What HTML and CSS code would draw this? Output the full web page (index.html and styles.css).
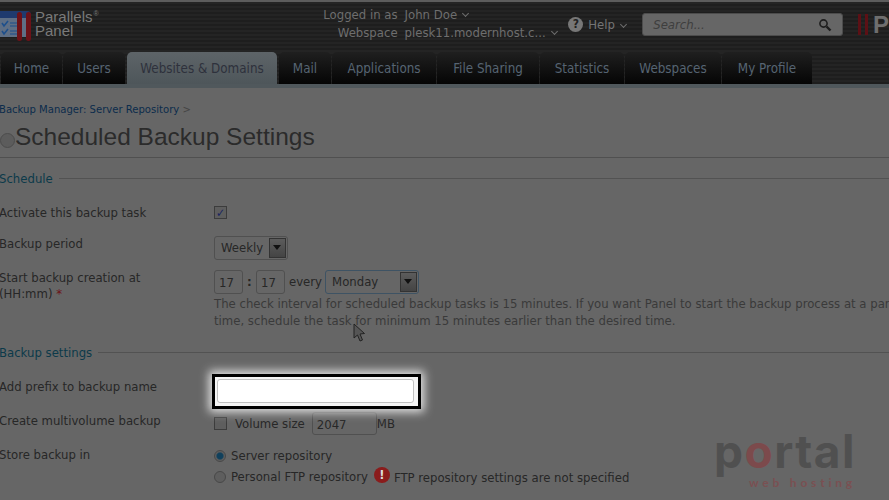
FILE: index.html
```html
<!DOCTYPE html>
<html lang="en">

<head>
    <meta charset="UTF-8">
    <title>Scheduled Backup Settings</title>
    <link rel="stylesheet" href="styles.css">
</head>

<body>
    <div class="header">
        <div class="logo">
            <svg class="logo-icon" width="32" height="30" viewBox="0 0 32 30">
                <path d="M0 0h27a4 4 0 0 1 4 4v8H0z" fill="#1f3a6e"></path>
                <path d="M0 7h28v17a2 2 0 0 1-2 2H0z" fill="#5f6f85"></path>
                <path d="M2 12l2 3 4-5M2 20l2 3 4-5" fill="none" stroke="#1d4f8c" stroke-width="1.6"></path>
                <path d="M10 12h7M10 15h7M10 20h7M10 23h7" stroke="#1d4f8c" stroke-width="1.2"></path>
                <rect x="17" y="1" width="5" height="29" rx="2.500" fill="#6c1218"></rect>
                <rect x="26" y="1" width="5" height="29" rx="2.500" fill="#6c1218"></rect>
            </svg>
            <div class="logo-text">Parallels<sup>®</sup><br>Panel</div>
        </div>
        <div class="account">
            <div class="account-row">
                <span class="account-label">Logged in as</span>
                <span class="account-value">John Doe</span>
                <span class="caret"></span>
            </div>
            <div class="account-row">
                <span class="account-label">Webspace</span>
                <span class="account-value">plesk11.modernhost.c...</span>
                <span class="caret"></span>
            </div>
        </div>
        <div class="help">
            <span class="help-icon">?</span>
            <span class="help-text">Help</span>
            <span class="caret"></span>
        </div>
        <div class="search">
            <span>Search...</span>
            <svg width="14" height="14" viewBox="0 0 14 14">
                <circle cx="5.500" cy="5.500" r="3.600" fill="none" stroke="#1e1e1e" stroke-width="1.600"></circle>
                <path d="M8.500 8.500l4 4" stroke="#1e1e1e" stroke-width="2.400"></path>
            </svg>
        </div>
        <div class="brand">
            <i></i><i></i><b>P</b>
        </div>
    </div>

    <div class="tabs">
        <a class="tab">Home</a>
        <a class="tab">Users</a>
        <a class="tab active">Websites &amp; Domains</a>
        <a class="tab">Mail</a>
        <a class="tab">Applications</a>
        <a class="tab">File Sharing</a>
        <a class="tab">Statistics</a>
        <a class="tab">Webspaces</a>
        <a class="tab">My Profile</a>
    </div>

    <div class="content">
        <div class="breadcrumb"><a>Backup Manager: Server Repository</a> <span>&gt;</span></div>
        <div class="title">
            <span class="title-icon"></span>
            <h1>Scheduled Backup Settings</h1>
        </div>

        <div class="section">Schedule</div>
        <div class="row row-activate">
            <label>Activate this backup task</label>
            <div class="field"><span class="checkbox checked">✓</span></div>
        </div>
        <div class="row row-period">
            <label>Backup period</label>
            <div class="field">
                <span class="select select-period">Weekly<span class="arrow"></span></span>
            </div>
        </div>
        <div class="row row-start">
            <label>Start backup creation at<br>(HH:mm) <em>*</em></label>
            <div class="field">
                <div class="time">
                    <span class="input input-time">17</span>
                    <span class="colon">:</span>
                    <span class="input input-time">17</span>
                    <span>every</span>
                    <span class="select select-day">Monday<span class="arrow"></span></span>
                </div>
                <p class="hint">The check interval for scheduled backup tasks is 15 minutes. If you want Panel to start the backup process at a particular<br>time, schedule the task for minimum 15 minutes earlier than the desired time.</p>
            </div>
        </div>

        <div class="section section-backup">Backup settings</div>
        <div class="row row-prefix">
            <label>Add prefix to backup name</label>
            <div class="field">
                <div class="highlight"><span class="prefix-input"></span></div>
            </div>
        </div>
        <div class="row row-volume">
            <label>Create multivolume backup</label>
            <div class="field volume">
                <span class="checkbox"></span>
                <span class="volume-label">Volume size</span>
                <span class="input input-volume">2047</span>
                <span>MB</span>
            </div>
        </div>
        <div class="row row-store">
            <label>Store backup in</label>
            <div class="field">
                <div class="radio-row"><span class="radio on"></span>Server repository</div>
                <div class="radio-row">
                    <span class="radio"></span>Personal FTP repository
                    <span class="warn">!</span>
                    <span class="warn-text">FTP repository settings are not specified</span>
                </div>
            </div>
        </div>
    </div>

    <svg class="cursor" width="14" height="20" viewBox="0 0 14 20">
        <path d="M1 1v14l3.500-3 2.500 6 2.500-1-2.500-6 4.500-.5z" fill="#555" stroke="#222" stroke-width="1"></path>
    </svg>

    <div class="watermark">
        <div class="wm-name">p<span>o</span>rtal</div>
        <div class="wm-sub">web hosting</div>
    </div>
</body>

</html>
```

FILE: styles.css
```css
body {
    margin: 0;
    width: 889px;
    height: 500px;
    overflow: hidden;
    position: relative;
    background-color: #666;
    font-family: "DejaVu Sans", sans-serif;
    font-stretch: condensed;
    font-size: 13px;
    color: #272727;
    white-space: nowrap;
}

/* header */
.header {
    height: 50px;
    display: flex;
    border-top: 2px solid #5c5c5c;
    background: repeating-linear-gradient(#242424 0, #242424 2px, #1e1e1e 2px, #1e1e1e 4px);
    color: #6e6e6e;
}

.logo {
    width: 321px;
    display: flex;
    padding-top: 8px;
}

.logo-icon {
    margin-top: 1px;
}

.logo-text {
    margin-left: 3px;
    font-family: "Liberation Sans", sans-serif;
    font-stretch: normal;
    font-size: 15px;
    line-height: 14px;
    color: #7a7a7a;
}

.logo-text sup {
    margin-left: 1px;
    font-size: 7px;
    line-height: 0;
}

.account {
    width: 238px;
    padding-top: 4px;
}

.account-row {
    display: flex;
    height: 18px;
    line-height: 18px;
}

.account-label {
    width: 77px;
    text-align: right;
    margin-right: 7px;
}

.caret {
    width: 4px;
    height: 4px;
    margin: 5px 0 0 6px;
    border-right: 1px solid #6e6e6e;
    border-bottom: 1px solid #6e6e6e;
    transform: rotate(45deg);
}

.help {
    width: 74px;
    margin-left: 10px;
    padding-top: 15px;
    display: flex;
    align-items: flex-start;
    color: #747474;
}

.help-icon {
    width: 15px;
    height: 15px;
    margin-right: 5px;
    border-radius: 50%;
    background-color: #777;
    color: #222;
    font-weight: bold;
    font-size: 12px;
    line-height: 15px;
    text-align: center;
}

.help-text {
    line-height: 15px;
}

.search {
    box-sizing: border-box;
    width: 201px;
    height: 23px;
    margin-top: 11px;
    padding: 0 10px;
    display: flex;
    align-items: center;
    justify-content: space-between;
    border: 1px solid #4c4c4c;
    border-radius: 3px;
    background-color: #666;
    font-style: italic;
    color: #3e3e3e;
}

.brand {
    margin-left: 15px;
    padding-top: 12px;
    display: flex;
    align-items: flex-start;
}

.brand i {
    width: 3px;
    height: 21px;
    margin-right: 4px;
    background-color: #5c1015;
}

.brand b {
    margin-left: 1px;
    font-family: "Liberation Sans", sans-serif;
    font-stretch: normal;
    font-size: 24px;
    line-height: 21px;
    color: #6e6e6e;
}

/* tabs */
.tabs {
    height: 32px;
    padding-left: 1px;
    display: grid;
    grid-template-columns: 61px 62px 152px 52px 104px 102px 84px 96px 90px;
    justify-content: start;
    gap: 1px;
    border-bottom: 4px solid #50585c;
    background: repeating-linear-gradient(#242424 0, #242424 2px, #1e1e1e 2px, #1e1e1e 4px);
}

.tab {
    box-sizing: border-box;
    height: 32px;
    border-radius: 5px 5px 0 0;
    background: linear-gradient(#1f1f1f, #050505);
    font-size: 13.300px;
    line-height: 33px;
    text-align: center;
    color: #566472;
}

.tab.active {
    margin: 0 1px;
    background: linear-gradient(#5e6468, #4e565a);
    color: #2e313c;
}

/* page content */
.content {
    padding-top: 15px;
}

.breadcrumb {
    height: 14px;
    margin-left: -1px;
    font-size: 11.200px;
    line-height: 14px;
    color: #444;
}

.breadcrumb a {
    color: #0c2c4c;
}

.title {
    height: 38px;
    margin-top: 2px;
    display: flex;
    border-bottom: 1px solid #505050;
}

.title-icon {
    width: 15px;
    height: 15px;
    margin-top: 14px;
    border-radius: 50%;
    background-color: #5c5c5c;
    border: 1px solid #4c4c4c;
    box-sizing: border-box;
}

.title h1 {
    margin: 0;
    font-family: "Liberation Sans", sans-serif;
    font-stretch: normal;
    font-weight: normal;
    font-size: 24.500px;
    line-height: 36px;
    color: #2b2b2b;
}

.section {
    display: flex;
    align-items: center;
    gap: 6px;
    height: 18px;
    margin-top: 11px;
    margin-left: -1px;
    font-size: 13px;
    color: #0c3a4a;
}

.section::after {
    content: "";
    flex: 1;
    height: 1px;
    background-color: #525252;
}

.section-backup {
    margin-top: 14px;
}

.row {
    display: flex;
    line-height: 16px;
}

.row label {
    width: 215px;
    flex-shrink: 0;
    margin-left: -1px;
}

.row-activate {
    margin-top: 18px;
}

.row-period {
    margin-top: 15px;
}

.row-start {
    margin-top: 10px;
}

.row label em {
    color: #6c1218;
    font-style: normal;
}

.checkbox {
    box-sizing: border-box;
    display: inline-block;
    width: 13px;
    height: 13px;
    border: 1px solid #3c3c3c;
    background-color: #5e5e5e;
    font-size: 12px;
    font-weight: bold;
    line-height: 12px;
    text-align: center;
    color: #1a2460;
}

.select {
    box-sizing: border-box;
    display: inline-flex;
    align-items: center;
    justify-content: space-between;
    height: 24px;
    padding: 0 1px 0 6px;
    border: 1px solid #505050;
    border-radius: 3px;
    background-color: #666;
}

.select-period {
    width: 74px;
}

.select-day {
    width: 94px;
    margin-left: -1px;
    border-color: #3e5364;
}

.arrow {
    box-sizing: border-box;
    width: 17px;
    height: 20px;
    border: 1px solid #333;
    background: linear-gradient(#5c5c5c, #444);
    position: relative;
}

.arrow::after {
    content: "";
    position: absolute;
    left: 3px;
    top: 6px;
    border: 4px solid transparent;
    border-top: 5px solid #111;
    border-bottom: 0;
}

.input {
    box-sizing: border-box;
    display: inline-block;
    height: 24px;
    border: 1px solid #505050;
    border-radius: 3px;
    background-color: #666;
    line-height: 24px;
    padding-left: 4px;
}

.time {
    display: flex;
    align-items: center;
    gap: 4px;
}

.input-time {
    width: 29px;
}

.colon {
    width: 5px;
    font-weight: bold;
}

.hint {
    margin: 0;
    padding-top: 1px;
    line-height: 17px;
    color: #3a3a3a;
}

.row-prefix {
    margin-top: 13px;
    align-items: flex-start;
}

.row-prefix label {
    margin-top: 5px;
}

.highlight {
    box-sizing: border-box;
    width: 209px;
    height: 35px;
    margin-left: -2px;
    padding: 2px;
    display: flex;
    border: 3px solid #000;
    background-color: #f5f5f5;
    box-shadow: 0 0 9px 3px #e4e4e4;
    position: relative;
}

.prefix-input {
    flex: 0 0 197px;
    box-sizing: border-box;
    height: 24px;
    border: 1px solid #c0c0c0;
    border-radius: 3px;
    background-color: #fff;
}

.row-volume {
    margin-top: 3px;
}

.row-volume label {
    margin-top: 1px;
}

.volume {
    display: flex;
    align-items: center;
}

.volume-label {
    margin-left: 8px;
    margin-right: 7px;
}

.input-volume {
    width: 65px;
    height: 23px;
    border-radius: 3px;
}

.row-store {
    margin-top: 12px;
}

.row-store .field {
    margin-top: -2px;
}

.radio-row {
    display: flex;
    align-items: center;
    height: 21px;
}

.radio {
    box-sizing: border-box;
    width: 12px;
    height: 12px;
    margin: 1px 5px 0 0;
    border: 1px solid #484848;
    border-radius: 50%;
    background-color: #5e5e5e;
}

.radio.on {
    background: radial-gradient(#10405c 40%, #5e5e5e 60%);
}

.warn {
    width: 16px;
    height: 16px;
    margin-left: 6px;
    margin-top: -3px;
    border-radius: 50%;
    background-color: #8a1c1c;
    color: #ddd;
    font-weight: bold;
    line-height: 16px;
    text-align: center;
}

.warn-text {
    margin-left: 4px;
    padding-top: 3px;
}

/* things on top of the page */
.cursor {
    position: absolute;
    left: 353px;
    top: 323px;
}

.watermark {
    position: absolute;
    left: 708px;
    top: 427px;
    font-family: Inter, sans-serif;
    font-stretch: normal;
    text-align: right;
    width: 148px;
}

.wm-name {
    height: 49px;
    font-weight: bold;
    font-size: 46px;
    line-height: 49px;
    letter-spacing: 1.500px;
    color: #505050;
}

.wm-name span {
    color: #7c4a4c;
}

.wm-sub {
    font-family: Lato, sans-serif;
    font-weight: bold;
    font-size: 12px;
    line-height: 14px;
    letter-spacing: 3.800px;
    color: #7a5052;
}
```
